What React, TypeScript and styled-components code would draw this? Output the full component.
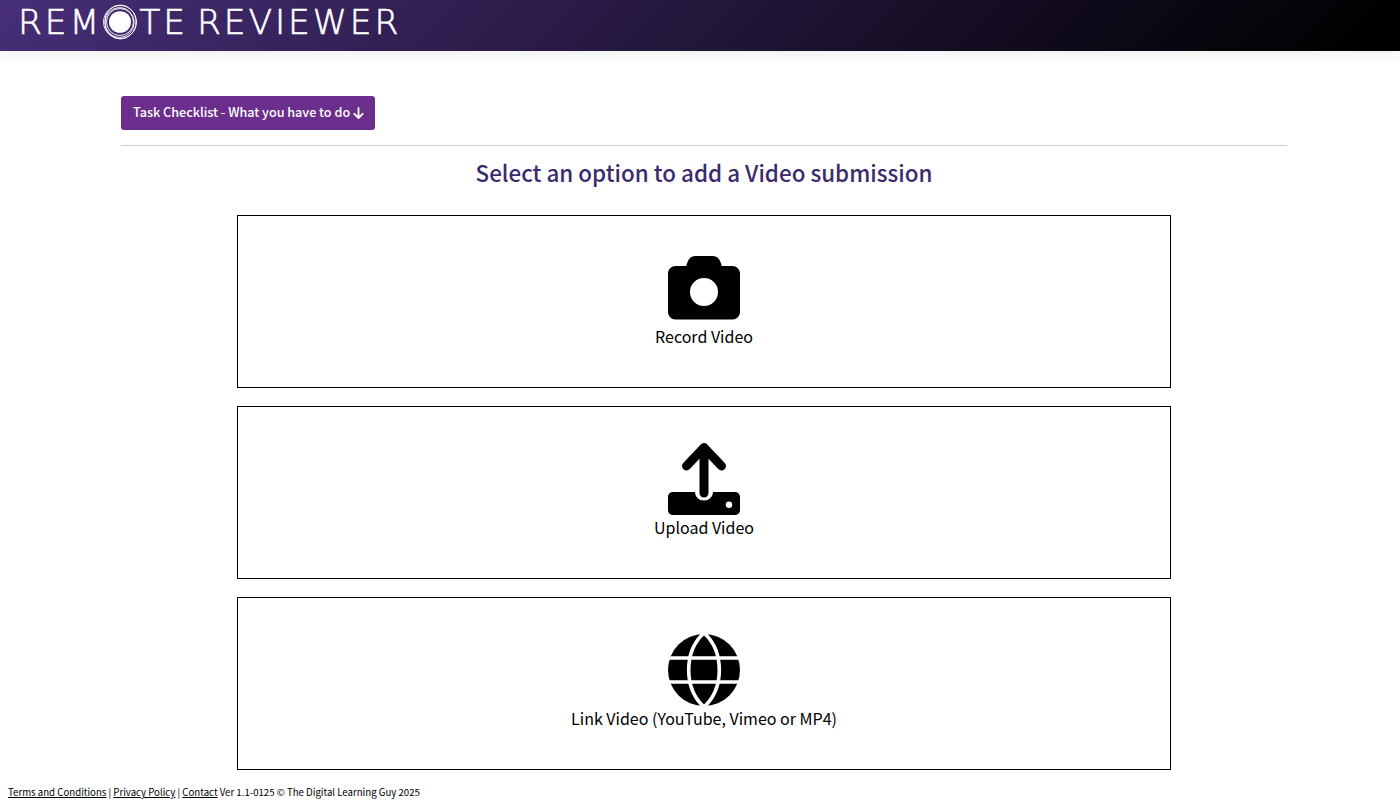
import React from 'react'
import styled, { createGlobalStyle } from 'styled-components'

const GlobalStyle = createGlobalStyle`
  html, body {
    margin: 0;
    padding: 0;
    background: #fff;
    font-family: "Noto Sans CJK JP", "Noto Sans", sans-serif;
    color: #000;
  }
`

const Page = styled.div`
  height: 810px;
  overflow: hidden;
  display: flex;
  flex-direction: column;
`

const Header = styled.header`
  height: 51px;
  flex: none;
  display: flex;
  align-items: flex-start;
  padding-left: 18px;
  background: linear-gradient(135deg, #472e78 0%, #000 97%);
  box-shadow: 0 3px 12px rgba(0, 0, 0, 0.08);
`

const Logo = styled.div`
  display: flex;
  align-items: center;
  height: 43px;
  font-family: "DejaVu Sans", Inter, sans-serif;
  font-weight: 200;
  font-size: 34.5px;
  letter-spacing: 2.9px;
  -webkit-text-stroke: 0.6px #fff;
  color: #fff;
  white-space: nowrap;
`

const LogoGap = styled.span`
  width: 9px;
`

const LogoMark = styled.svg`
  width: 36px;
  height: 38px;
  margin: 0 1px 0 0;
  flex: none;
`

const Main = styled.main`
  width: 1166px;
  margin: 45px 0 0 121px;
`

const ChecklistButton = styled.button`
  display: flex;
  align-items: center;
  gap: 3px;
  height: 34px;
  padding: 0 11px 3px 12px;
  border: 0;
  border-radius: 3px;
  background: #6c2e8c;
  color: #fff;
  font-family: inherit;
  font-size: 12.6px;
  font-weight: 500;

  svg {
    margin-top: 2px;
  }
`

const Divider = styled.hr`
  margin: 15px 0 0;
  border: 0;
  border-top: 1px solid #ccc;
`

const Title = styled.h2`
  margin: 9px 0 25px;
  height: 35px;
  line-height: 35px;
  text-align: center;
  font-size: 22.4px;
  font-weight: 500;
  color: #3c2a6e;
`

const Options = styled.div`
  display: flex;
  flex-direction: column;
  gap: 18px;
  width: 934px;
  margin: 0 auto;
`

const OptionCard = styled.button`
  box-sizing: border-box;
  height: 173px;
  display: flex;
  flex-direction: column;
  align-items: center;
  padding: 36px 0 0;
  border: 1px solid #000;
  border-radius: 0;
  background: #fff;
  color: #000;
  font-family: inherit;
  font-size: 16px;
  line-height: 24px;
`

const OptionIcon = styled.svg`
  width: 72px;
  height: 72px;
  flex: none;
  display: block;
`

const Footer = styled.footer`
  margin: 14px 0 0 8px;
  font-size: 9.66px;
  line-height: 16px;
  white-space: nowrap;

  a {
    color: #000;
    text-decoration: underline;
  }
`

const DownArrow = () => (
  <svg width="11" height="12" viewBox="0 0 11 12" fill="none" stroke="#fff" strokeWidth="1.8" strokeLinecap="round" strokeLinejoin="round">
    <path d="M5.500 1v10M1.300 6.800 5.500 11l4.200-4.200" />
  </svg>
)

const CameraIcon = () => (
  <OptionIcon viewBox="0 0 72 72">
    <path
      fillRule="evenodd"
      d="M27 4h18c3.500 0 6 2 7.500 6l1.300 4h10.700c4 0 7.500 3.500 7.500 7.500V60c0 4-3.500 7.500-7.500 7.500h-57C3.500 67.500 0 64 0 60V21.500C0 17.500 3.500 14 7.500 14h10.700l1.300-4C21 6 23.500 4 27 4Zm9 22a14 14 0 1 0 0 28 14 14 0 0 0 0-28Z"
    />
  </OptionIcon>
)

const UploadIcon = () => (
  <OptionIcon viewBox="0 0 72 72">
    <path
      d="M36 50V6M18.500 23 36 4.500 53.500 23"
      fill="none"
      stroke="#000"
      strokeWidth="9"
      strokeLinecap="round"
      strokeLinejoin="round"
    />
    <path
      fillRule="evenodd"
      d="M5 49h22c.500 5.500 4 8.500 9 8.500s8.500-3 9-8.500h22c3 0 5 2.200 5 5v13c0 2.800-2 5-5 5H5c-3 0-5-2.200-5-5V54c0-2.800 2-5 5-5Zm56 9.500a3.200 3.200 0 1 0 0 6.400 3.200 3.200 0 0 0 0-6.400Z"
    />
  </OptionIcon>
)

const GlobeIcon = () => (
  <OptionIcon viewBox="0 0 72 72">
    <circle cx="36" cy="36" r="36" />
    <g fill="none" stroke="#fff" strokeWidth="3.600">
      <path d="M36 -1C25 9 20.700 22 20.700 36s4.300 27 15.300 37C47 63 51.300 50 51.300 36S47 9 36 -1Z" />
      <path d="M-1 24h74M-1 48h74" />
    </g>
  </OptionIcon>
)

const options = [
  { label: 'Record Video', icon: <CameraIcon /> },
  { label: 'Upload Video', icon: <UploadIcon /> },
  { label: 'Link Video (YouTube, Vimeo or MP4)', icon: <GlobeIcon /> },
]

const App: React.FC = () => (
  <Page>
    <GlobalStyle />
    <Header>
      <Logo>
        REM
        <LogoMark viewBox="0 0 36 38">
          <g fill="none" stroke="#fff" strokeWidth="0.9">
            <circle cx="18" cy="19" r="16.500" />
            <ellipse cx="18.400" cy="19" rx="15.500" ry="17" />
            <ellipse cx="17.600" cy="19.500" rx="14.500" ry="15" />
            <circle cx="18" cy="19" r="13.500" />
          </g>
          <ellipse cx="18" cy="19" rx="11" ry="10.800" fill="#fff" />
        </LogoMark>
        TE
        <LogoGap />
        REVIEWER
      </Logo>
    </Header>
    <Main>
      <ChecklistButton>
        Task Checklist - What you have to do
        <DownArrow />
      </ChecklistButton>
      <Divider />
      <Title>Select an option to add a Video submission</Title>
      <Options>
        {options.map((option) => (
          <OptionCard key={option.label}>
            {option.icon}
            {option.label}
          </OptionCard>
        ))}
      </Options>
    </Main>
    <Footer>
      <a href="#">Terms and Conditions</a> | <a href="#">Privacy Policy</a> | <a href="#">Contact</a> Ver 1.1-0125 © The Digital Learning Guy 2025
    </Footer>
  </Page>
)

export default App
